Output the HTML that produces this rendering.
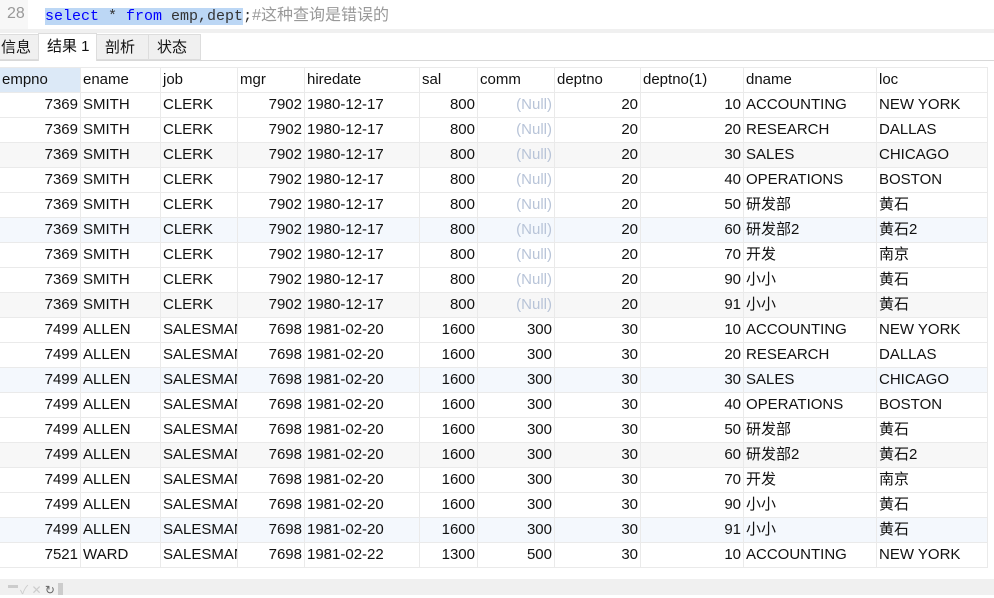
<!DOCTYPE html>
<html><head><meta charset="utf-8"><style>
body{margin:0;width:994px;height:595px;overflow:hidden;background:#fff;font-family:"Liberation Sans","Noto Sans CJK SC",sans-serif;position:relative}
.ed{position:absolute;left:0;top:0;width:994px;height:29px;background:#fff}
.gut{position:absolute;left:0;top:0;width:28px;height:29px;background:#f7f7f7}
.ln{position:absolute;left:7px;top:5px;font:16px "Liberation Sans",sans-serif;color:#999}
.code{position:absolute;left:45px;top:1px;font:15px "Liberation Mono","Noto Sans CJK SC",monospace;color:#333;white-space:nowrap}
.sel{background:#bcd7f5}
.kw{color:#0000ff}
.cm{color:#999;font-family:"Liberation Sans","Noto Sans CJK SC",sans-serif;font-size:16px}
.strip{position:absolute;left:0;top:29px;width:994px;height:4px;background:#f0f0f0}
.tab{position:absolute;top:34px;height:26px;background:#f0f0f0;border:1px solid #ddd;font-size:15px;line-height:26px;box-sizing:border-box;padding-left:8px;color:#111}
.tabline{position:absolute;left:0;top:60px;width:994px;height:1px;background:#d8d8d8}
table{position:absolute;left:-1px;top:67px;width:988px;border-collapse:collapse;table-layout:fixed;font-size:15px;color:#111}
td{height:24px;border:1px solid #eaeaea;padding:0 2px;white-space:nowrap;overflow:hidden;line-height:24px}
td.r{text-align:right}
td.n{color:#b8c4d8;text-align:right}
tr.g td{background:#f7f7f7}
tr.b td{background:#f4f8fd}
.foot{position:absolute;left:0;top:579px;width:994px;height:16px;background:#f0f0f0}
</style></head><body>
<div class="ed"><div class="gut"></div><div class="ln">28</div>
<div class="code"><span class="sel"><span class="kw">select</span> * <span class="kw">from</span> emp,dept</span>;<span class="cm">#这种查询是错误的</span></div></div>
<div class="strip"></div>
<div class="tab" style="left:-10px;width:50px;padding-left:10px">信息</div>
<div class="tab" style="left:38px;width:59px;top:33px;height:28px;background:#fff;border-bottom:none;z-index:2">结果 1</div>
<div class="tab" style="left:96px;width:53px">剖析</div>
<div class="tab" style="left:148px;width:53px">状态</div>
<div class="tabline"></div>
<table>
<colgroup><col style="width:81px"><col style="width:80px"><col style="width:77px"><col style="width:67px"><col style="width:115px"><col style="width:58px"><col style="width:77px"><col style="width:86px"><col style="width:103px"><col style="width:133px"><col style="width:111px"></colgroup>
<tr><td style="background:#dce9f7">empno</td><td>ename</td><td>job</td><td>mgr</td><td>hiredate</td><td>sal</td><td>comm</td><td>deptno</td><td>deptno(1)</td><td>dname</td><td>loc</td></tr>
<tr><td class="r">7369</td><td>SMITH</td><td>CLERK</td><td class="r">7902</td><td>1980-12-17</td><td class="r">800</td><td class="n">(Null)</td><td class="r">20</td><td class="r">10</td><td>ACCOUNTING</td><td>NEW YORK</td></tr>
<tr><td class="r">7369</td><td>SMITH</td><td>CLERK</td><td class="r">7902</td><td>1980-12-17</td><td class="r">800</td><td class="n">(Null)</td><td class="r">20</td><td class="r">20</td><td>RESEARCH</td><td>DALLAS</td></tr>
<tr class="g"><td class="r">7369</td><td>SMITH</td><td>CLERK</td><td class="r">7902</td><td>1980-12-17</td><td class="r">800</td><td class="n">(Null)</td><td class="r">20</td><td class="r">30</td><td>SALES</td><td>CHICAGO</td></tr>
<tr><td class="r">7369</td><td>SMITH</td><td>CLERK</td><td class="r">7902</td><td>1980-12-17</td><td class="r">800</td><td class="n">(Null)</td><td class="r">20</td><td class="r">40</td><td>OPERATIONS</td><td>BOSTON</td></tr>
<tr><td class="r">7369</td><td>SMITH</td><td>CLERK</td><td class="r">7902</td><td>1980-12-17</td><td class="r">800</td><td class="n">(Null)</td><td class="r">20</td><td class="r">50</td><td>研发部</td><td>黄石</td></tr>
<tr class="b"><td class="r">7369</td><td>SMITH</td><td>CLERK</td><td class="r">7902</td><td>1980-12-17</td><td class="r">800</td><td class="n">(Null)</td><td class="r">20</td><td class="r">60</td><td>研发部2</td><td>黄石2</td></tr>
<tr><td class="r">7369</td><td>SMITH</td><td>CLERK</td><td class="r">7902</td><td>1980-12-17</td><td class="r">800</td><td class="n">(Null)</td><td class="r">20</td><td class="r">70</td><td>开发</td><td>南京</td></tr>
<tr><td class="r">7369</td><td>SMITH</td><td>CLERK</td><td class="r">7902</td><td>1980-12-17</td><td class="r">800</td><td class="n">(Null)</td><td class="r">20</td><td class="r">90</td><td>小小</td><td>黄石</td></tr>
<tr class="g"><td class="r">7369</td><td>SMITH</td><td>CLERK</td><td class="r">7902</td><td>1980-12-17</td><td class="r">800</td><td class="n">(Null)</td><td class="r">20</td><td class="r">91</td><td>小小</td><td>黄石</td></tr>
<tr><td class="r">7499</td><td>ALLEN</td><td>SALESMAN</td><td class="r">7698</td><td>1981-02-20</td><td class="r">1600</td><td class="r">300</td><td class="r">30</td><td class="r">10</td><td>ACCOUNTING</td><td>NEW YORK</td></tr>
<tr><td class="r">7499</td><td>ALLEN</td><td>SALESMAN</td><td class="r">7698</td><td>1981-02-20</td><td class="r">1600</td><td class="r">300</td><td class="r">30</td><td class="r">20</td><td>RESEARCH</td><td>DALLAS</td></tr>
<tr class="b"><td class="r">7499</td><td>ALLEN</td><td>SALESMAN</td><td class="r">7698</td><td>1981-02-20</td><td class="r">1600</td><td class="r">300</td><td class="r">30</td><td class="r">30</td><td>SALES</td><td>CHICAGO</td></tr>
<tr><td class="r">7499</td><td>ALLEN</td><td>SALESMAN</td><td class="r">7698</td><td>1981-02-20</td><td class="r">1600</td><td class="r">300</td><td class="r">30</td><td class="r">40</td><td>OPERATIONS</td><td>BOSTON</td></tr>
<tr><td class="r">7499</td><td>ALLEN</td><td>SALESMAN</td><td class="r">7698</td><td>1981-02-20</td><td class="r">1600</td><td class="r">300</td><td class="r">30</td><td class="r">50</td><td>研发部</td><td>黄石</td></tr>
<tr class="g"><td class="r">7499</td><td>ALLEN</td><td>SALESMAN</td><td class="r">7698</td><td>1981-02-20</td><td class="r">1600</td><td class="r">300</td><td class="r">30</td><td class="r">60</td><td>研发部2</td><td>黄石2</td></tr>
<tr><td class="r">7499</td><td>ALLEN</td><td>SALESMAN</td><td class="r">7698</td><td>1981-02-20</td><td class="r">1600</td><td class="r">300</td><td class="r">30</td><td class="r">70</td><td>开发</td><td>南京</td></tr>
<tr><td class="r">7499</td><td>ALLEN</td><td>SALESMAN</td><td class="r">7698</td><td>1981-02-20</td><td class="r">1600</td><td class="r">300</td><td class="r">30</td><td class="r">90</td><td>小小</td><td>黄石</td></tr>
<tr class="b"><td class="r">7499</td><td>ALLEN</td><td>SALESMAN</td><td class="r">7698</td><td>1981-02-20</td><td class="r">1600</td><td class="r">300</td><td class="r">30</td><td class="r">91</td><td>小小</td><td>黄石</td></tr>
<tr><td class="r">7521</td><td>WARD</td><td>SALESMAN</td><td class="r">7698</td><td>1981-02-22</td><td class="r">1300</td><td class="r">500</td><td class="r">30</td><td class="r">10</td><td>ACCOUNTING</td><td>NEW YORK</td></tr>
</table>
<div class="foot"><span style="position:absolute;left:8px;top:6px;width:10px;height:3px;background:#ccc"></span><span style="position:absolute;left:20px;top:2px;font-size:12px;color:#ccc">✓ ✕ <span style="color:#666">↻</span></span><span style="position:absolute;left:58px;top:4px;width:5px;height:12px;background:#ccc"></span></div>
</body></html>
